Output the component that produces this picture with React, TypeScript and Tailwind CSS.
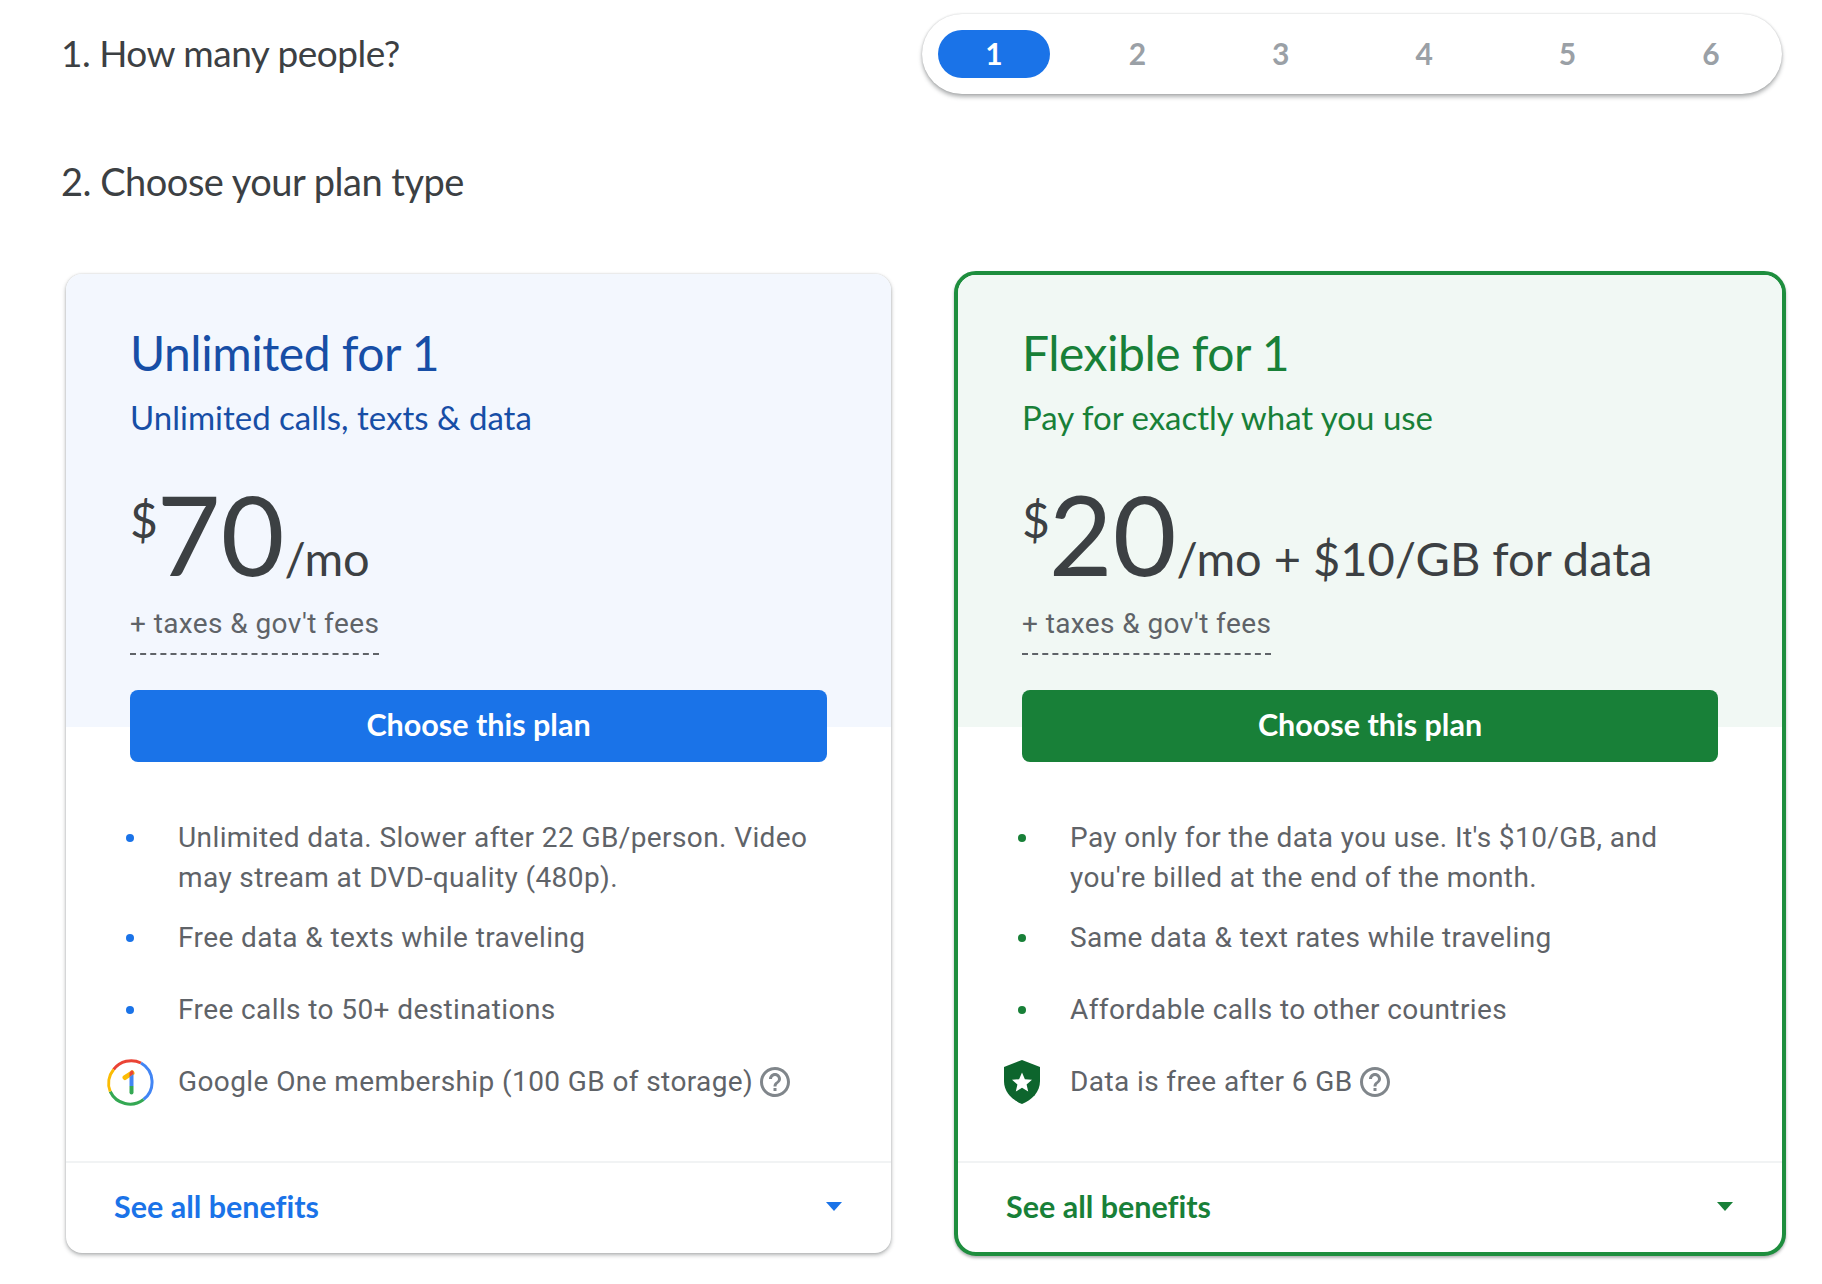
import { MdHelpOutline } from "react-icons/md";

const display = "font-['Lato','Open_Sans',sans-serif] [font-variant-ligatures:none]";

const plans = [
  {
    title: "Unlimited for 1",
    subtitle: "Unlimited calls, texts & data",
    price: "70",
    priceNote: "/mo",
    bullets: [
      "Unlimited data. Slower after 22 GB/person. Video may stream at DVD-quality (480p).",
      "Free data & texts while traveling",
      "Free calls to 50+ destinations",
    ],
    perk: "Google One membership (100 GB of storage)",
    green: false,
  },
  {
    title: "Flexible for 1",
    subtitle: "Pay for exactly what you use",
    price: "20",
    priceNote: "/mo + $10/GB for data",
    bullets: [
      "Pay only for the data you use. It's $10/GB, and you're billed at the end of the month.",
      "Same data & text rates while traveling",
      "Affordable calls to other countries",
    ],
    perk: "Data is free after 6 GB",
    green: true,
  },
];

function GoogleOneIcon() {
  return (
    <svg width="48" height="48" viewBox="0 0 48 48" fill="none">
      <g strokeWidth="3">
        <path d="M7.6 11.5A22 22 0 0 1 35 5" stroke="#ea4335" />
        <path d="M35 5A22 22 0 0 1 37.5 41.5" stroke="#4285f4" />
        <path d="M37.5 41.5A22 22 0 0 1 4.2 33.5" stroke="#34a853" />
        <path d="M4.2 33.5A22 22 0 0 1 7.6 11.5" stroke="#fbbc04" />
      </g>
      <path d="M26 15 19 19.5" stroke="#fbbc04" strokeWidth="5" strokeLinecap="round" />
      <path d="M25 12.5 26.5 12.5 Q27.5 13 27.5 14 L27.5 16 L23.5 19 L23.5 15Z" fill="#ea4335" />
      <path d="M23.5 19 L27.5 16 L27.5 28 L23.5 28Z" fill="#4285f4" />
      <path d="M23.5 28H27.5V34.5a2 2 0 0 1-4 0Z" fill="#34a853" />
    </svg>
  );
}

function ShieldIcon() {
  return (
    <svg width="36" height="44" viewBox="0 0 36 44">
      <path d="M18 0 36 7V21C36 32 28 40 18 44 8 40 0 32 0 21V7Z" fill="#0d652d" />
      <path
        d="M18 12.5 20.9 19.2 28 19.8 22.6 24.5 24.2 31.5 18 27.8 11.8 31.5 13.4 24.5 8 19.8 15.1 19.2Z"
        fill="#fff"
      />
    </svg>
  );
}

function PlanCard({ plan }: { plan: (typeof plans)[number] }) {
  const { green } = plan;
  return (
    <div
      className={
        green
          ? "h-[985px] w-[832px] rounded-[22px] border-4 border-[#1e8e3e] bg-white shadow-[0_2px_3px_rgba(60,64,67,0.4)] overflow-hidden"
          : "h-[979px] w-[825px] rounded-[16px] bg-white shadow-[0_2px_4px_rgba(60,64,67,0.4),0_0_2px_rgba(60,64,67,0.2)] overflow-hidden"
      }
    >
      {/* Tinted header runs behind the top half of the button */}
      <div
        className={
          green
            ? "px-[64px] pt-[48px] bg-[linear-gradient(#f1f8f4_452px,#ffffff_452px)]"
            : "px-[64px] pt-[49px] bg-[linear-gradient(#f3f7fe_453px,#ffffff_453px)]"
        }
      >
        <h2 className={`${display} text-[48px] leading-[60px] tracking-[-0.5px] ${green ? "text-[#188038]" : "text-[#174ea6]"}`}>
          {plan.title}
        </h2>
        <p className={`${display} mt-[14px] text-[33px] leading-[40px] ${green ? "text-[#188038]" : "text-[#174ea6]"}`}>
          {plan.subtitle}
        </p>
        <div className={`${display} mt-[44px] flex items-baseline text-[#3c4043] h-[104px]`}>
          <span className="self-start text-[48px] leading-[56px] mt-[11px]">$</span>
          <span className="ml-[-1px] text-[110px] leading-[104px]">{plan.price}</span>
          <span className="text-[47px] leading-[56px]">{plan.priceNote}</span>
        </div>
        <div className="mt-[21px] w-fit border-b-2 border-dashed border-[#5f6368] pb-[11px] font-['Roboto',sans-serif] text-[28px] leading-[36px] tracking-[0.4px] text-[#5f6368]">
          + taxes &amp; gov't fees
        </div>
        <button
          className={`${display} mt-[35px] block h-[72px] w-full rounded-[8px] pb-[2px] text-[30.5px] font-bold text-white ${green ? "bg-[#188038]" : "bg-[#1a73e8]"}`}
        >
          Choose this plan
        </button>
      </div>

      <ul className="px-[40px] pt-[56px] font-['Roboto',sans-serif] text-[28px] leading-[40px] tracking-[0.4px] text-[#5f6368]">
        {plan.bullets.map((text) => (
          <li key={text} className="flex gap-[24px] pb-[32px] first:pb-[20px]">
            <span className="flex h-[40px] w-[48px] shrink-0 items-center justify-center">
              <span className={`h-[8px] w-[8px] rounded-full ${green ? "bg-[#188038]" : "bg-[#1a73e8]"}`} />
            </span>
            <span className="w-[660px]">{text}</span>
          </li>
        ))}
        <li className="flex h-[40px] items-center gap-[24px]">
          <span className="flex h-[40px] w-[48px] shrink-0 items-center justify-center">
            {green ? <ShieldIcon /> : <GoogleOneIcon />}
          </span>
          <span>{plan.perk}</span>
          <MdHelpOutline className="ml-[-20px] text-[#80868b]" size={36} />
        </li>
      </ul>

      <div className="mt-[59px] flex h-[91px] items-center justify-between border-t-2 border-[#f1f3f4] pb-[2px] pl-[48px] pr-[49px]">
        <span className={`${display} text-[30.5px] font-bold ${green ? "text-[#188038]" : "text-[#1a73e8]"}`}>
          See all benefits
        </span>
        <span
          className={`h-0 w-0 border-x-[8px] border-t-[9px] border-x-transparent ${green ? "border-t-[#188038]" : "border-t-[#1a73e8]"}`}
        />
      </div>
    </div>
  );
}

export default function App() {
  return (
    <div className="min-h-[1284px] bg-white pt-[14px] text-[#3c4043]">
      <div className="flex items-center justify-between pl-[61px] pr-[40px]">
        <h1 className={`${display} pb-[3px] text-[37px] tracking-[-0.5px]`}>1. How many people?</h1>
        <div className="flex h-[80px] w-[860px] items-center justify-between rounded-[40px] bg-white pl-[16px] pr-[15px] shadow-[0_3px_4px_rgba(60,64,67,0.4),0_0_2px_rgba(60,64,67,0.25)]">
          {["1", "2", "3", "4", "5", "6"].map((n, i) => (
            <span
              key={n}
              className={
                i === 0
                  ? `${display} flex h-[48px] w-[112px] items-center justify-center rounded-[24px] bg-[#1a73e8] pb-[2px] text-[30px] font-bold text-white`
                  : `${display} flex h-[48px] w-[112px] items-center justify-center pb-[2px] text-[30px] font-bold text-[#9aa0a6]`
              }
            >
              {n}
            </span>
          ))}
        </div>
      </div>

      <h1 className={`${display} mt-[63px] pl-[61px] text-[38px] leading-[48px] tracking-[-0.5px]`}>
        2. Choose your plan type
      </h1>

      <div className="mt-[66px] flex items-center gap-[63px] pl-[66px]">
        {plans.map((plan) => (
          <PlanCard key={plan.title} plan={plan} />
        ))}
      </div>
    </div>
  );
}
